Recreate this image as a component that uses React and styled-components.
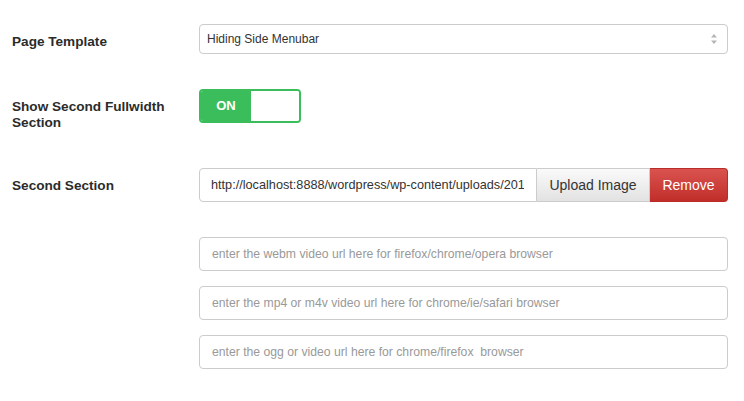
import React from "react";
import styled, { createGlobalStyle } from "styled-components";

const Global = createGlobalStyle`
  html, body { margin: 0; padding: 0; background: #fff; }
  body { font-family: "Liberation Sans", Arial, Helvetica, sans-serif; color: #333; }
  * { box-sizing: border-box; }
`;

const Page = styled.div`
  width: 744px;
  height: 401px;
  padding: 24px 16px 0 12px;
  background: #fff;
`;

const Row = styled.div`
  display: grid;
  grid-template-columns: 187px 1fr;
  align-items: start;
  margin-bottom: ${(p) => p.$mb || 0}px;
`;

const Label = styled.div`
  font-size: 13.6px;
  font-weight: bold;
  line-height: 16px;
  color: #2b2b2b;
  padding-top: 10px;
  width: 172px;
`;

const Field = styled.div`
  display: flex;
  flex-direction: column;
  gap: 15px;
`;

const SelectBox = styled.div`
  position: relative;
  height: 30px;
  border: 1px solid #ccc;
  border-radius: 4px;
  display: flex;
  align-items: center;
  padding: 0 28px 0 7px;
  font-size: 12px;
  color: #333;
  background: #fff;
`;

const Arrows = styled.svg`
  position: absolute;
  right: 9px;
  top: 50%;
  transform: translateY(-50%);
`;

const Toggle = styled.div`
  display: flex;
  width: 102px;
  height: 34px;
  border: 2px solid #3cbd5c;
  border-radius: 4px;
  overflow: hidden;
`;

const ToggleOn = styled.div`
  width: 50px;
  background: #3cbd5c;
  color: #fff;
  font-size: 13px;
  font-weight: bold;
  display: flex;
  align-items: center;
  justify-content: center;
  padding-bottom: 2px;
`;

const ToggleOff = styled.div`
  flex: 1;
  background: #fff;
  border-radius: 3px 0 0 3px;
`;

const InputGroup = styled.div`
  display: flex;
  height: 34px;
`;

const TextInput = styled.input`
  flex: ${(p) => (p.$grouped ? "1 1 auto" : "none")};
  min-width: 0;
  width: 100%;
  height: 34px;
  border: 1px solid #ccc;
  border-radius: ${(p) => (p.$grouped ? "4px 0 0 4px" : "4px")};
  padding: 0 12px 0 ${(p) => (p.$grouped ? 11 : 12)}px;
  font-family: "Liberation Sans", Arial, Helvetica, sans-serif;
  font-size: ${(p) => (p.$grouped ? 12.7 : 12.2)}px;
  color: #333;
  outline: none;
  background: #fff;
  &::placeholder { color: #999; }
`;

const Button = styled.button`
  flex: none;
  height: 34px;
  padding: 0 12px;
  font-family: "Liberation Sans", Arial, Helvetica, sans-serif;
  font-size: 14px;
  border: 1px solid ${(p) => (p.$danger ? "#b92c28" : "#ccc")};
  border-left-width: 0;
  color: ${(p) => (p.$danger ? "#fff" : "#333")};
  background: ${(p) =>
    p.$danger
      ? "linear-gradient(#d9534f, #c12e2a)"
      : "linear-gradient(#fafafa, #e2e2e2)"};
  border-radius: ${(p) => (p.$last ? "0 4px 4px 0" : "0")};
  width: ${(p) => p.$w}px;
`;

export default function App() {
  return (
    <Page>
      <Global />
      <Row $mb={35}>
        <Label>Page Template</Label>
        <Field>
          <SelectBox>
            Hiding Side Menubar
            <Arrows width="8" height="12" viewBox="0 0 8 12">
              <path d="M4 1 L7 4.5 L1 4.5 Z" fill="#b5b5b5" />
              <path d="M4 11 L7 7.5 L1 7.5 Z" fill="#b5b5b5" />
            </Arrows>
          </SelectBox>
        </Field>
      </Row>
      <Row $mb={37}>
        <Label>Show Second Fullwidth Section</Label>
        <Field>
          <Toggle>
            <ToggleOn>ON</ToggleOn>
            <ToggleOff />
          </Toggle>
        </Field>
      </Row>
      <Row $mb={35}>
        <Label>Second Section</Label>
        <Field>
          <InputGroup>
            <TextInput
              $grouped
              readOnly
              value="http://localhost:8888/wordpress/wp-content/uploads/2015/03/bg.jpg"
            />
            <Button $w={113}>Upload Image</Button>
            <Button $danger $last $w={78}>Remove</Button>
          </InputGroup>
        </Field>
      </Row>
      <Row>
        <div />
        <Field>
          <TextInput placeholder="enter the webm video url here for firefox/chrome/opera browser" />
          <TextInput placeholder="enter the mp4 or m4v video url here for chrome/ie/safari browser" />
          <TextInput placeholder="enter the ogg or video url here for chrome/firefox  browser" />
        </Field>
      </Row>
    </Page>
  );
}
